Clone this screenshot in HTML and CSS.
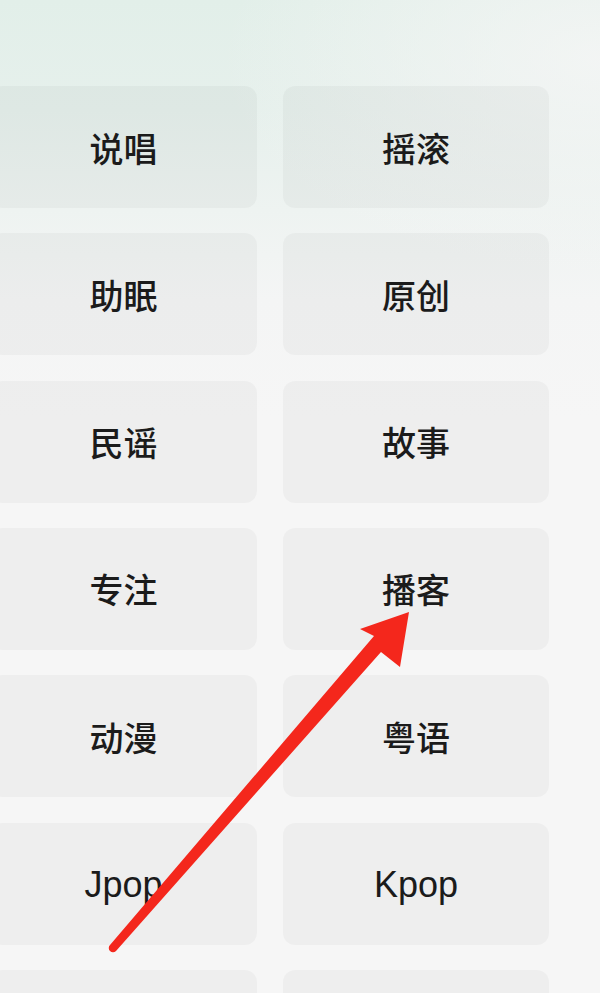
FILE: index.html
```html
<!DOCTYPE html>
<html lang="zh-CN">
<head>
<meta charset="utf-8">
<title>分类</title>
<link rel="stylesheet" href="styles.css">
</head>
<body>
<div class="page">
  <div class="grid">
    <div class="card">说唱</div>
    <div class="card">摇滚</div>
    <div class="card">助眠</div>
    <div class="card">原创</div>
    <div class="card">民谣</div>
    <div class="card">故事</div>
    <div class="card">专注</div>
    <div class="card">播客</div>
    <div class="card">动漫</div>
    <div class="card">粤语</div>
    <div class="card latin">Jpop</div>
    <div class="card latin">Kpop</div>
    <div class="card"></div>
    <div class="card"></div>
  </div>
  <svg class="arrow" width="600" height="993" viewBox="0 0 600 993">
    <path d="M110 945 L374 636 L360 629 L409 612 L400 667 L381 652 L116 951 A4 4 0 0 1 110 945 Z" fill="#f4271c"/>
  </svg>
</div>
</body>
</html>
```
FILE: styles.css
```css
html, body {
  margin: 0;
  padding: 0;
}
body {
  width: 600px;
  height: 993px;
  overflow: hidden;
  background: #f6f6f6;
  font-family: "Liberation Sans", "Noto Sans CJK SC", sans-serif;
}
.page {
  position: relative;
  width: 600px;
  height: 993px;
  overflow: hidden;
  background:
    radial-gradient(ellipse 380px 220px at 600px 60px, rgba(246,246,246,0.8), rgba(246,246,246,0) 100%),
    linear-gradient(180deg, #e2efe9 0px, #e6f0ec 110px, #eef3f1 210px, #f4f5f5 300px, #f6f6f6 420px);
}
.grid {
  display: grid;
  grid-template-columns: 267px 266px;
  grid-auto-rows: 122px;
  column-gap: 26px;
  row-gap: 25.33px;
  padding-top: 86px;
  margin-left: -10px;
}
.card {
  display: flex;
  align-items: center;
  justify-content: center;
  border-radius: 12px;
  background: rgba(0, 0, 0, 0.033);
  color: #1b1b1b;
  font-size: 34px;
  font-weight: 500;
}
.card.latin {
  font-size: 36px;
  font-weight: 400;
  padding-top: 2px;
}
.arrow {
  position: absolute;
  left: 0;
  top: 0;
}
```
